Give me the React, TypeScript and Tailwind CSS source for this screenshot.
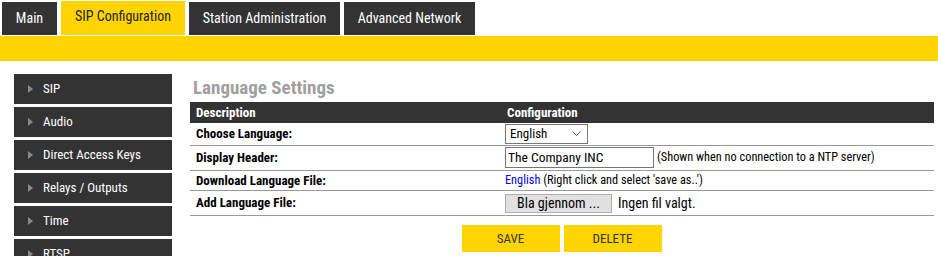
const font = { fontFamily: "'Roboto Condensed','Liberation Sans Narrow','DejaVu Sans Condensed',Roboto,sans-serif" };

const tabs = ["Main", "SIP Configuration", "Station Administration", "Advanced Network"];
const menu = ["SIP", "Audio", "Direct Access Keys", "Relays / Outputs", "Time", "RTSP"];

function Arrow() {
  return (
    <svg width="5" height="8" viewBox="0 0 5 8" className="shrink-0">
      <path d="M0 0 L5 4 L0 8 Z" fill="#8a8a8a" />
    </svg>
  );
}

export default function App() {
  return (
    <div className="h-[256px] w-[938px] overflow-hidden bg-white text-[13px]" style={font}>
      <nav className="flex items-end gap-1 pl-[2px] pt-[1px]">
        {tabs.map((t, i) =>
          i === 1 ? (
            <div key={t} className="flex h-[34px] w-[124px] items-center justify-center bg-[#ffd400] pb-1 text-[14px] text-[#222]">{t}</div>
          ) : (
            <div key={t} className={`flex h-[33px] items-center justify-center bg-[#333] text-[14px] text-white ${i === 0 ? "w-[55px]" : i === 2 ? "w-[151px]" : "w-[131px]"}`}>{t}</div>
          )
        )}
      </nav>
      <div className="mt-[1px] h-[25px] bg-[#ffd400]" />

      <div className="flex">
        <aside className="ml-[14px] mt-[13px] flex w-[158px] flex-col gap-[3px]">
          {menu.map((m) => (
            <div key={m} className="flex h-[30px] items-center gap-[10px] bg-[#333] pl-[14px] text-white">
              <Arrow />
              <span>{m}</span>
            </div>
          ))}
        </aside>

        <main className="ml-[18px] mt-[13px] w-[744px]">
          <h1 className="pl-[3px] text-[19px] font-bold leading-[27px] text-[#a0a0a0]">Language Settings</h1>
          <table className="mt-[1px] w-full border-collapse text-[13px]">
            <thead>
              <tr className="h-[21px] bg-[#333] text-left font-bold text-white">
                <th className="w-[313px] pl-[6px] leading-none">Description</th>
                <th className="pl-[4px] leading-none">Configuration</th>
              </tr>
            </thead>
            <tbody className="font-bold text-black">
              <tr className="h-[22px] border-b border-[#999]">
                <td className="pl-[6px]">Choose Language:</td>
                <td className="pl-[2px] font-normal">
                  <div className="flex h-[20px] w-[83px] items-center justify-between border border-[#767676] pl-[4px] pr-[6px]">
                    <span>English</span>
                    <svg width="9" height="6" viewBox="0 0 9 6"><path d="M0.5 0.5 L4.5 4.5 L8.5 0.5" fill="none" stroke="#555" strokeWidth="1" /></svg>
                  </div>
                </td>
              </tr>
              <tr className="h-[25px] border-b border-[#999]">
                <td className="pl-[6px]">Display Header:</td>
                <td className="pl-[2px] font-normal">
                  <div className="flex items-center gap-[3px]">
                    <div className="flex h-[21px] w-[149px] items-center border border-[#767676] pl-[2px] text-[13.5px]">The Company INC</div>
                    <span className="text-[12.3px]">(Shown when no connection to a NTP server)</span>
                  </div>
                </td>
              </tr>
              <tr className="h-[20px] border-b border-[#999]">
                <td className="pl-[6px]">Download Language File:</td>
                <td className="pl-[2px] text-[12.3px] font-normal">
                  <span className="text-[#0000ee]">English</span> (Right click and select 'save as..')
                </td>
              </tr>
              <tr className="h-[25px] border-b border-[#999]">
                <td className="pl-[6px]">Add Language File:</td>
                <td className="pl-[2px] font-normal">
                  <div className="flex items-center gap-[6px]">
                    <div className="flex h-[19px] w-[107px] items-center justify-center border border-[#adadad] bg-[#e1e1e1] text-[14px]">Bla gjennom ...</div>
                    <span className="text-[14px]">Ingen fil valgt.</span>
                  </div>
                </td>
              </tr>
            </tbody>
          </table>
          <div className="mt-[9px] flex justify-center gap-[4px] pr-[1px]">
            <div className="flex h-[27px] w-[98px] items-center justify-center bg-[#ffd400] text-[13px] text-[#333]">SAVE</div>
            <div className="flex h-[27px] w-[98px] items-center justify-center bg-[#ffd400] text-[13px] text-[#333]">DELETE</div>
          </div>
        </main>
      </div>
    </div>
  );
}
